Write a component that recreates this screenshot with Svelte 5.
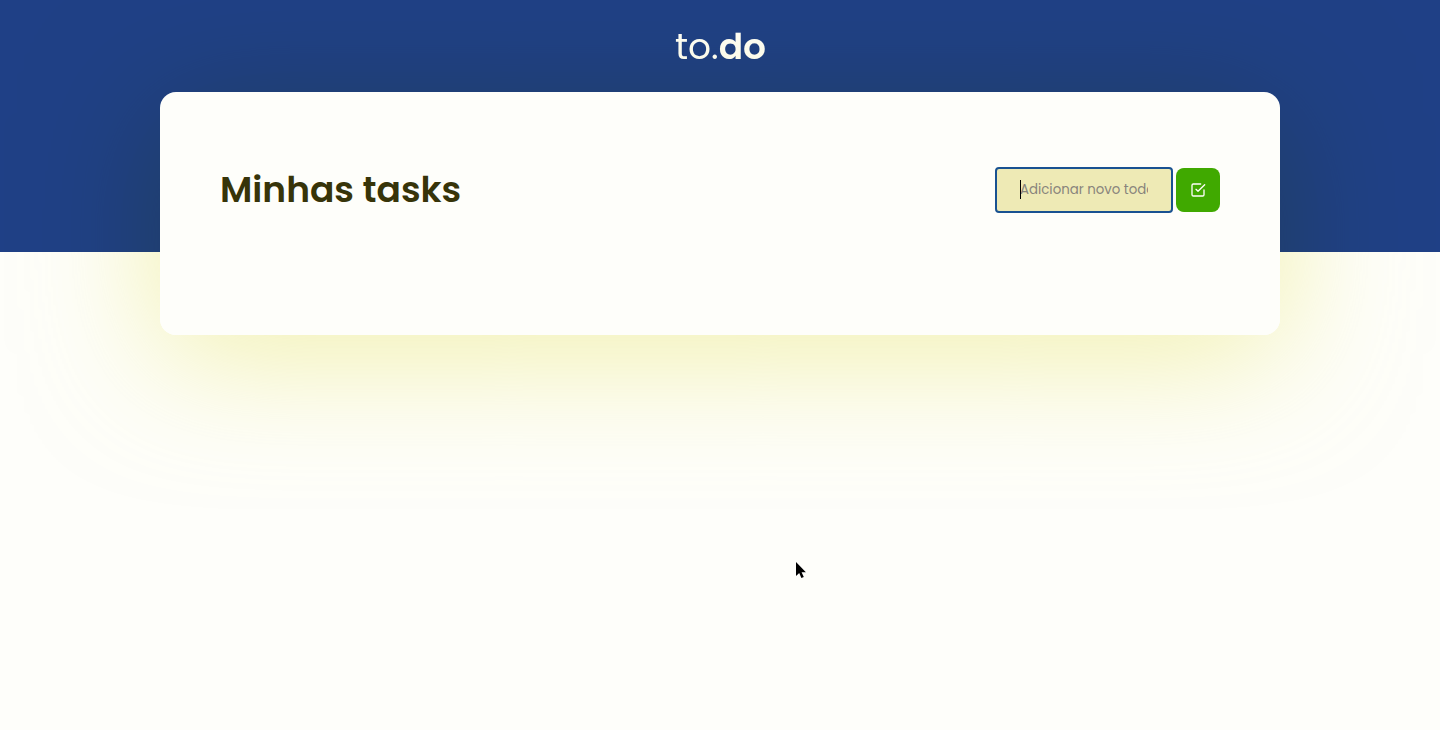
<script>
  let task = $state('');
</script>

<div class="page">
  <header><div class="logo"><span class="to">to.</span><strong>do</strong></div></header>
  <div class="shade"></div>
  <main class="card">
    <h1>Minhas tasks</h1>
    <form onsubmit={(e) => e.preventDefault()}>
      <div class="field">
        <input type="text" placeholder="Adicionar novo todo" bind:value={task} />
        <span class="caret"></span>
      </div>
      <button type="submit" aria-label="Adicionar">
        <svg width="16" height="16" viewBox="0 0 24 24" fill="none" stroke="currentColor" stroke-width="2" stroke-linecap="round" stroke-linejoin="round">
          <polyline points="9 11 12 14 22 4" />
          <path d="M21 12v7a2 2 0 0 1-2 2H5a2 2 0 0 1-2-2V5a2 2 0 0 1 2-2h11" />
        </svg>
      </button>
    </form>
  </main>
  <svg class="pointer" width="14" height="20" viewBox="0 0 14 20">
    <path d="M1 1v14l3.2-3 2.2 5 2.4-1-2.2-4.8h4.3z" fill="#000" stroke="#fff" stroke-width="1" paint-order="stroke" />
  </svg>
</div>

<style>
  :global(body) {
    margin: 0;
    background: #fefefa;
  }
  .page {
    position: relative;
    height: 730px;
    overflow: hidden;
    background: #fefefa;
    font-family: Poppins, Inter, "Open Sans", sans-serif;
  }
  header {
    box-sizing: border-box;
    height: 252px;
    padding: 20px 0 0 1px;
    background: #1f4086;
    color: #fefefa;
    text-align: center;
  }
  .logo {
    font-size: 36px;
    line-height: 54px;
  }
  .to {
    font-weight: 400;
  }
  .logo strong {
    font-weight: 600;
  }
  .shade {
    position: absolute;
    left: 160px;
    top: 92px;
    width: 1120px;
    height: 243px;
    border-radius: 16px;
    box-shadow: 0 20px 130px rgba(230, 228, 95, 0.5);
    mix-blend-mode: multiply;
  }
  .card {
    position: relative;
    box-sizing: border-box;
    display: flex;
    align-items: flex-start;
    justify-content: space-between;
    width: 1120px;
    height: 243px;
    margin: -160px auto 0;
    padding: 75px 60px 0;
    border-radius: 16px;
    background: #fefefa;
  }
  h1 {
    margin: -4px 0 0;
    color: #373409;
    font-size: 36px;
    font-weight: 600;
    line-height: 54px;
    white-space: nowrap;
  }
  form {
    display: flex;
    align-items: center;
    gap: 3px;
  }
  .field {
    position: relative;
    width: 178px;
    height: 46px;
  }
  input {
    box-sizing: border-box;
    display: block;
    width: 178px;
    height: 46px;
    padding: 0 23px;
    border: 2px solid #195291;
    border-radius: 4px;
    outline: none;
    background: #eeeab5;
    font: 400 13.33px Poppins, Inter, "Open Sans", sans-serif;
  }
  input::placeholder {
    color: #88847c;
    opacity: 1;
  }
  .caret {
    position: absolute;
    left: 25px;
    top: 13px;
    width: 1px;
    height: 19px;
    background: #000;
  }
  button {
    display: grid;
    place-items: center;
    width: 44px;
    height: 44px;
    padding: 0;
    border: 0;
    border-radius: 8px;
    background: #40a900;
    color: #fefefa;
  }
  .pointer {
    position: absolute;
    left: 795px;
    top: 561px;
  }
</style>
